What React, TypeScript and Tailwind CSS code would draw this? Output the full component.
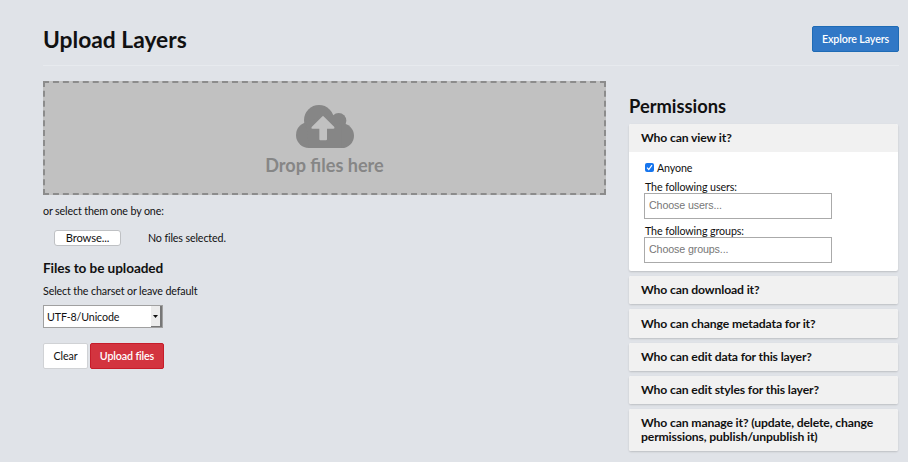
import React from "react";

const closedPanels = [
  "Who can download it?",
  "Who can change metadata for it?",
  "Who can edit data for this layer?",
  "Who can edit styles for this layer?",
];

function CloudUpload() {
  return (
    <svg className="h-[43px] w-[58px] shrink-0" viewBox="0 0 174 129">
      <g fill="#868686">
        <circle cx="39" cy="90" r="39" />
        <circle cx="69" cy="45" r="45" />
        <circle cx="128" cy="47" r="23" />
        <circle cx="137" cy="92" r="37" />
        <path d="M39 129H137V60L110 30L30 50Z" />
      </g>
      <path
        d="M78 35Q81 31 84 35L115 66Q117 71 112 71H93V103Q93 106 90 106H73Q70 106 70 103V71H49Q44 71 47 66Z"
        fill="#c1c1c1"
      />
    </svg>
  );
}

function Panel({ title, children }: { title: string; children?: React.ReactNode }) {
  return (
    <section className="overflow-hidden rounded-[2px] bg-white shadow-[0_1px_2px_rgba(0,0,0,0.16)]">
      <h3 className="bg-[#f1f1f1] pb-[7.6px] pl-3 pr-4 pt-[7.2px] text-[12.2px] font-bold leading-[13.4px] tracking-[-0.14px]">
        {title}
      </h3>
      {children}
    </section>
  );
}

function Field({ label, placeholder }: { label: string; placeholder: string }) {
  return (
    <label className="block">
      <span className="block h-[13px] pl-px text-[10.7px] leading-[14px] tracking-[-0.1px]">{label}</span>
      <input
        className="block h-[26px] w-[188px] border border-[#aaa] bg-white px-1 pb-[2px] text-[10.7px] placeholder:text-[#777] placeholder:opacity-100 font-['Liberation_Sans',sans-serif]"
        placeholder={placeholder}
      />
    </label>
  );
}

export default function App() {
  return (
    <main className="h-[462px] w-[908px] overflow-hidden bg-[#e0e3e8] pl-[43px] pr-[9px] pt-[26px] font-[Lato,sans-serif] text-[10.7px] tracking-[-0.13px] text-[#111]">
      <header className="flex h-[40px] items-start justify-between border-b border-[#e7eaee]">
        <h1 className="text-[22.8px] font-bold leading-[26px] tracking-normal text-[#111]">Upload Layers</h1>
        <button className="h-[26px] w-[87px] rounded-[2px] border border-[#1f6bb5] bg-[#3178c6] pt-px text-[10.7px] font-semibold leading-none text-white">
          Explore Layers
        </button>
      </header>

      <div className="flex gap-[23px] pt-[15px]">
        <div className="w-[563px]">
          <div className="flex h-[114px] flex-col items-center border-2 border-dashed border-[#8c8c8c] bg-[#c1c1c1] pt-[22px]">
            <CloudUpload />
            <div className="mt-[5px] text-[18.1px] font-bold leading-[24px] tracking-normal text-[#868686]">
              Drop files here
            </div>
          </div>
          <p className="mt-[9px] leading-[14px]">or select them one by one:</p>
          <div className="mt-[12px] flex h-[16px] items-center pl-[11px]">
            <button className="h-[16px] w-[67px] rounded-[3px] border border-[#bfc1c4] bg-white pb-px text-[11.2px] leading-[13px]">
              Browse...
            </button>
            <span className="ml-[27px] leading-[14px]">No files selected.</span>
          </div>
          <h2 className="mt-[13px] text-[13.6px] font-bold leading-[18px] tracking-[-0.07px]">Files to be uploaded</h2>
          <p className="mt-[7px] leading-[14px]">Select the charset or leave default</p>
          <div className="mt-[7px] flex h-[23px] w-[120px] items-center justify-between border border-[#a0a0a0] bg-white pl-[3px]">
            <span className="pt-px">UTF-8/Unicode</span>
            <span className="flex h-full w-[11px] items-center justify-center border-b border-r-2 border-[#777] bg-[#ececec]">
              <svg className="h-[3px] w-[5px]" viewBox="0 0 5 3">
                <path d="M0 0H5L2.5 3Z" fill="#111" />
              </svg>
            </span>
          </div>
          <div className="mt-[15px] flex gap-[2px]">
            <button className="h-[26px] w-[45px] rounded-[2px] border border-[#d0d2d5] bg-white pt-px text-[10.7px]">
              Clear
            </button>
            <button className="h-[26px] w-[74px] rounded-[2px] border border-[#c61c2a] bg-[#d3343f] pt-px font-semibold text-white">
              Upload files
            </button>
          </div>
        </div>

        <aside className="w-[269px] pt-[13px]">
          <h2 className="mb-[6px] text-[18.3px] font-bold leading-[24px] tracking-normal">Permissions</h2>
          <div className="flex flex-col gap-[5px]">
            <Panel title="Who can view it?">
              <div className="h-[119px] pl-[15px] pt-[9px]">
                <div className="mb-[6px] flex h-[13px] items-center gap-[3px] pl-px text-[10.7px]">
                  <span className="flex h-[9px] w-[9px] items-center justify-center rounded-[2px] bg-[#1675ee]">
                    <svg className="h-[7px] w-[7px]" viewBox="0 0 7 7">
                      <path d="M1 3.7L2.8 5.5L6 1.2" fill="none" stroke="white" strokeWidth="1.2" />
                    </svg>
                  </span>
                  Anyone
                </div>
                <Field label="The following users:" placeholder="Choose users..." />
                <div className="h-[5px]" />
                <Field label="The following groups:" placeholder="Choose groups..." />
              </div>
            </Panel>
            {closedPanels.map((title) => (
              <Panel key={title} title={title} />
            ))}
            <Panel title="Who can manage it? (update, delete, change permissions, publish/unpublish it)" />
          </div>
        </aside>
      </div>
    </main>
  );
}
